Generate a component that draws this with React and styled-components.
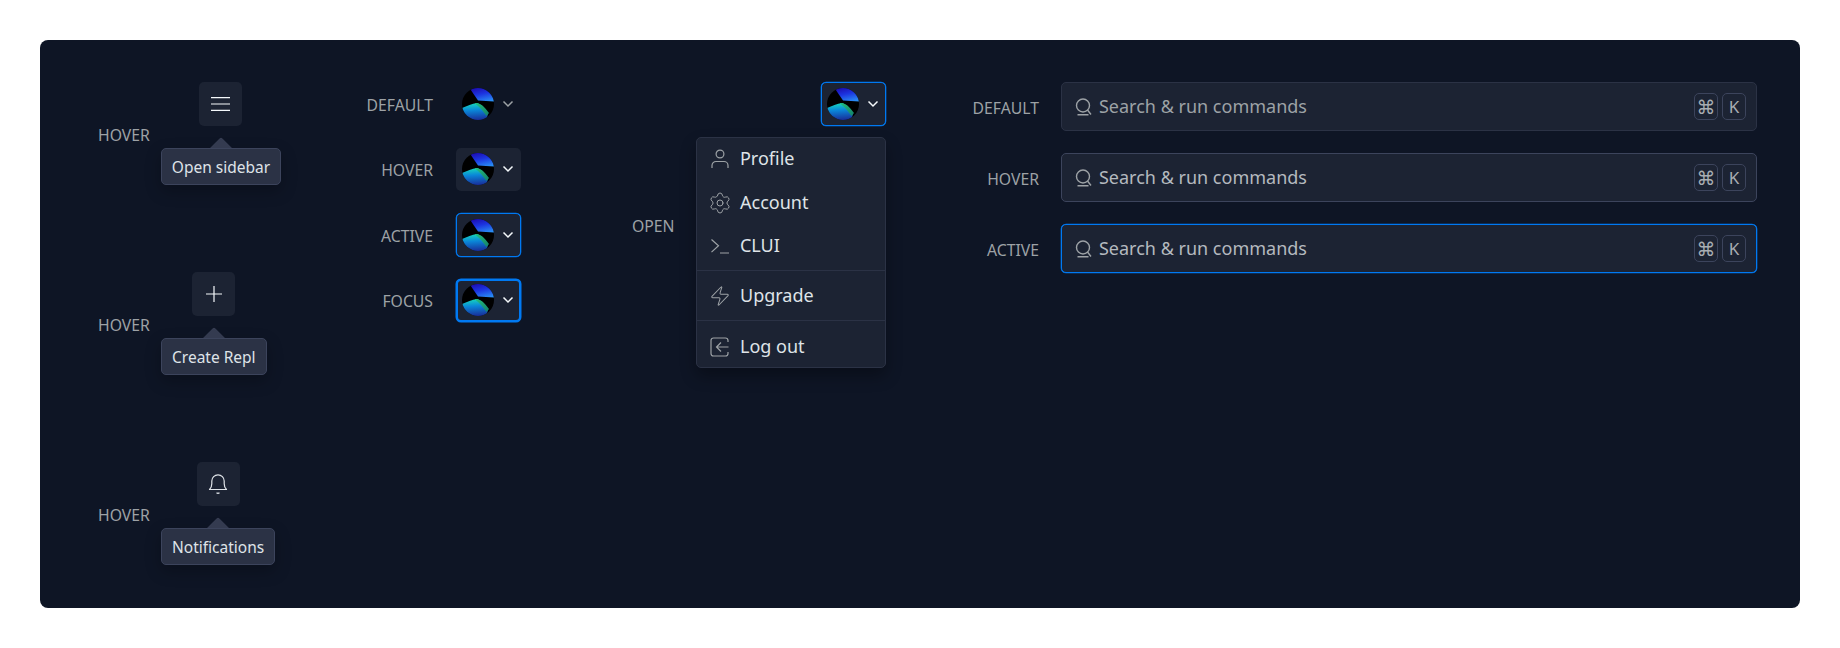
import React from "react";
import styled, { createGlobalStyle } from "styled-components";
import { Settings, Zap } from "lucide-react";

const GlobalStyle = createGlobalStyle`
  html, body { margin: 0; background: #fff; }
  body { font-family: "Noto Sans", "Open Sans", sans-serif; }
`;

const Page = styled.div`
  width: 1840px;
  height: 648px;
  padding: 40px;
  box-sizing: border-box;
`;

const Panel = styled.div`
  height: 568px;
  box-sizing: border-box;
  padding: 42px 43px 0 58px;
  background: #0e1525;
  border-radius: 8px;
  display: flex;
  align-items: flex-start;
`;

const Label = styled.span`
  justify-self: end;
  font-size: 15.75px;
  line-height: 20px;
  color: #9da2a6;
  text-align: right;
  white-space: nowrap;
  position: relative;
  top: 1px;
`;

const TooltipColumn = styled.div`
  width: 182px;
  flex: none;
  display: flex;
  flex-direction: column;
  gap: 87px;
`;

const TooltipGroup = styled.div`
  display: flex;
  align-items: center;
  gap: 11px;
`;

const GroupLabel = styled(Label)`
  width: 52px;
  text-align: left;
`;

const TooltipStack = styled.div`
  display: flex;
  flex-direction: column;
  align-items: center;
  gap: 22px;
`;

const IconTile = styled.div`
  width: 43px;
  height: 44px;
  display: flex;
  align-items: center;
  justify-content: center;
  background: #1c2333;
  border-radius: 5px;
  color: #f5f9fc;
`;

const Tooltip = styled.div`
  position: relative;
  height: 37px;
  box-sizing: border-box;
  padding: 0 10px;
  display: flex;
  align-items: center;
  font-size: 15.5px;
  color: #dfe3e8;
  background: #2b3245;
  border: 1px solid #3c445c;
  border-radius: 5px;
  box-shadow: 0 6px 16px rgba(2, 2, 3, 0.25);
  white-space: nowrap;

  &::before {
    content: "";
    position: absolute;
    left: 50%;
    top: -9px;
    width: 16px;
    height: 16px;
    margin-left: -8px;
    background: #343b50;
    transform: rotate(45deg);
    border-radius: 3px 0 0 0;
    clip-path: polygon(0 0, 100% 0, 0 100%);
  }
`;

const StateColumn = styled.div`
  margin-left: 88px;
  flex: none;
  display: grid;
  grid-template-columns: 65px 65px;
  grid-auto-rows: 43.5px;
  column-gap: 22.6px;
  row-gap: 22px;
  align-items: center;
`;

const AccountButton = styled.div`
  width: 65px;
  height: 43.5px;
  box-sizing: border-box;
  padding-left: ${(p) => (p.$state === "focus" ? 4 : 5)}px;
  display: flex;
  align-items: center;
  gap: 8px;
  border-radius: 5px;
  background: ${(p) => (p.$state === "default" ? "transparent" : "#1c2333")};
  border: ${(p) => (p.$state === "focus" ? 2 : 1)}px solid
    ${(p) => (p.$state === "active" || p.$state === "focus" ? "#0079f2" : "transparent")};
  box-shadow: ${(p) => (p.$state === "focus" ? "0 0 0 0.5px #0079f2" : p.$state === "active" ? "0 0 0 0.3px #0079f2" : "none")};
  color: ${(p) => (p.$state === "default" ? "#9da2a6" : "#f5f9fc")};
`;

const OpenColumn = styled.div`
  margin-left: 111.4px;
  flex: none;
  display: flex;
  align-items: center;
  gap: 22px;
`;

const OpenLabel = styled(Label)`
  width: 42px;
  text-align: left;
`;

const OpenStack = styled.div`
  display: flex;
  flex-direction: column;
  align-items: flex-end;
  gap: 11px;
`;

const Menu = styled.div`
  width: 190px;
  height: 231px;
  box-sizing: border-box;
  background: #1c2333;
  border: 1px solid #2b3245;
  border-radius: 5px;
  box-shadow: 0 8px 16px rgba(2, 2, 3, 0.32);
`;

const MenuSection = styled.div`
  padding: ${(p) => p.$padding};
  & + & {
    border-top: 1px solid #2b3245;
  }
`;

const MenuItem = styled.div`
  height: 43.5px;
  box-sizing: border-box;
  padding: 0 0 2px 13px;
  display: flex;
  align-items: center;
  gap: 10px;
  font-size: 18px;
  color: #dfe3e8;
`;

const MenuIcon = styled.span`
  width: 20px;
  height: 20px;
  flex: none;
  display: flex;
  align-items: center;
  justify-content: center;
  color: #9da2a6;
  position: relative;
  top: 1px;
  svg {
    flex: none;
  }
`;

const SearchColumn = styled.div`
  margin-left: 87px;
  flex: 1;
  display: grid;
  grid-template-columns: 66px 1fr;
  grid-auto-rows: 49px;
  column-gap: 22px;
  row-gap: 22px;
  align-items: center;
`;

const SearchBox = styled.div`
  height: 49px;
  box-sizing: border-box;
  padding: 0 10px 0 13px;
  display: flex;
  align-items: center;
  gap: 7px;
  background: #1c2333;
  border-radius: 5px;
  border: 1px solid
    ${(p) => (p.$state === "active" ? "#0079f2" : p.$state === "hover" ? "#3c445c" : "#2b3245")};
  box-shadow: ${(p) => (p.$state === "active" ? "0 0 0 0.3px #0079f2" : "none")};
  color: #9da2a6;
  svg {
    flex: none;
  }
`;

const SearchText = styled.span`
  flex: 1;
  font-size: 18px;
  position: relative;
  top: -1px;
  color: ${(p) => (p.$state === "default" ? "#9da2a6" : "#b4b9bf")};
`;

const Keys = styled.div`
  display: flex;
  gap: 4px;
`;

const Key = styled.kbd`
  width: 24px;
  height: 27px;
  box-sizing: border-box;
  display: flex;
  align-items: center;
  justify-content: center;
  border: 1px solid #3c445c;
  border-radius: 5px;
  font-family: ${(p) => (p.$glyph ? '"DejaVu Sans"' : '"Noto Sans"')}, sans-serif;
  font-size: ${(p) => (p.$glyph ? 19 : 17)}px;
  color: #a8adb2;
`;

function Bars() {
  return (
    <svg width="21" height="16" viewBox="0 0 21 16" fill="none" stroke="currentColor" strokeWidth="1.2">
      <path d="M1 1.700h19M1 8h19M1 14.300h19" />
    </svg>
  );
}

function Plus() {
  return (
    <svg width="18" height="18" viewBox="0 0 18 18" fill="none" stroke="currentColor" strokeWidth="1.2">
      <path d="M9 1v16M1 9h16" />
    </svg>
  );
}

function Bell() {
  return (
    <svg width="20" height="22" viewBox="0 0 20 22" fill="none" stroke="#dfe3e8" strokeWidth="1.2" strokeLinejoin="round">
      <path d="M1.500 16.500c1.600-1.500 2.300-3.200 2.300-5.700V8a6.200 6.200 0 0 1 12.400 0v2.800c0 2.500.7 4.200 2.300 5.700Z" />
      <path d="M8.500 19.700c.8.700 2.200.700 3 0" />
    </svg>
  );
}

function Chevron() {
  return (
    <svg width="12" height="8" viewBox="0 0 12 8" fill="none" stroke="currentColor" strokeWidth="1.5">
      <path d="M1.500 1.500 6 6l4.500-4.500" />
    </svg>
  );
}

function Avatar({ id }) {
  return (
    <svg width="32" height="32" viewBox="0 0 32 32">
      <defs>
        <clipPath id={`round-${id}`}>
          <circle cx="16" cy="16" r="16" />
        </clipPath>
        <linearGradient id={`top-${id}`} x1="0.35" y1="0" x2="0.75" y2="1">
          <stop offset="0" stopColor="#1c0cb0" />
          <stop offset="0.45" stopColor="#1c34e0" />
          <stop offset="1" stopColor="#2a90f5" />
        </linearGradient>
        <linearGradient id={`low-${id}`} x1="0.4" y1="0" x2="0.5" y2="1">
          <stop offset="0" stopColor="#16d8bc" />
          <stop offset="0.4" stopColor="#0a86d8" />
          <stop offset="1" stopColor="#1a2694" />
        </linearGradient>
        <linearGradient id={`ridge-${id}`} x1="0" y1="0" x2="1" y2="1">
          <stop offset="0" stopColor="#22c07c" />
          <stop offset="1" stopColor="#14806a" />
        </linearGradient>
      </defs>
      <g clipPath={`url(#round-${id})`}>
        <rect width="32" height="32" fill="#000" />
        <path d="M7.500 0 16 12.500 33 13.600V-1H7.500Z" fill={`url(#top-${id})`} />
        <path d="M0 20C5 18 10 15.500 15 15 19 16 23 21 26 26L24 33H0Z" fill={`url(#low-${id})`} />
        <path d="M13 15C18 14.500 22 18 27 25L24.500 28C21 23 18 19 13 15.500Z" fill={`url(#ridge-${id})`} />
      </g>
    </svg>
  );
}

function Person() {
  return (
    <svg width="20" height="20" viewBox="0 0 20 20" fill="none" stroke="currentColor" strokeWidth="1.2">
      <circle cx="10" cy="5" r="3.900" />
      <path d="M2 19v-2.500c0-2.200 1.800-4 4-4h8c2.200 0 4 1.800 4 4V19" />
    </svg>
  );
}

function Prompt() {
  return (
    <svg width="20" height="20" viewBox="0 0 20 20" fill="none" stroke="currentColor" strokeWidth="1.2">
      <path d="m1.500 3.500 7 6.300-7 6.300M10 17h9" />
    </svg>
  );
}

function LogOut() {
  return (
    <svg width="20" height="20" viewBox="0 0 20 20" fill="none" stroke="currentColor" strokeWidth="1.2">
      <path d="M18 5V3.500C18 2 17 1 15.500 1h-12C2 1 1 2 1 3.500v13C1 18 2 19 3.500 19h12c1.500 0 2.500-1 2.500-2.500V15" />
      <path d="M18.500 10H7M11 5.500 6.500 10l4.500 4.500" />
    </svg>
  );
}

function SearchIcon() {
  return (
    <svg width="17" height="18" viewBox="0 0 17 18" fill="none" stroke="#9da2a6" strokeWidth="1.4">
      <circle cx="8" cy="7.500" r="6.500" />
      <path d="M2.500 16.800h11M12.500 12l3.500 4.500" />
    </svg>
  );
}

const tooltips = [
  { name: "Open sidebar", icon: <Bars /> },
  { name: "Create Repl", icon: <Plus /> },
  { name: "Notifications", icon: <Bell /> },
];

const accountStates = ["default", "hover", "active", "focus"];
const searchStates = ["default", "hover", "active"];

export default function App() {
  return (
    <Page>
      <GlobalStyle />
      <Panel>
        <TooltipColumn>
          {tooltips.map((t) => (
            <TooltipGroup key={t.name}>
              <GroupLabel>HOVER</GroupLabel>
              <TooltipStack>
                <IconTile>{t.icon}</IconTile>
                <Tooltip>{t.name}</Tooltip>
              </TooltipStack>
            </TooltipGroup>
          ))}
        </TooltipColumn>

        <StateColumn>
          {accountStates.map((s) => (
            <React.Fragment key={s}>
              <Label>{s.toUpperCase()}</Label>
              <AccountButton $state={s}>
                <Avatar id={s} />
                <Chevron />
              </AccountButton>
            </React.Fragment>
          ))}
        </StateColumn>

        <OpenColumn>
          <OpenLabel>OPEN</OpenLabel>
          <OpenStack>
            <AccountButton $state="active">
              <Avatar id="open" />
              <Chevron />
            </AccountButton>
            <Menu>
              <MenuSection $padding="0 0 1.5px">
                <MenuItem><MenuIcon><Person /></MenuIcon>Profile</MenuItem>
                <MenuItem><MenuIcon><Settings size={24} strokeWidth={1} /></MenuIcon>Account</MenuItem>
                <MenuItem><MenuIcon><Prompt /></MenuIcon>CLUI</MenuItem>
              </MenuSection>
              <MenuSection $padding="4px 0 2px">
                <MenuItem><MenuIcon><Zap size={22} strokeWidth={1.1} /></MenuIcon>Upgrade</MenuItem>
              </MenuSection>
              <MenuSection $padding="4px 0 0">
                <MenuItem><MenuIcon><LogOut /></MenuIcon>Log out</MenuItem>
              </MenuSection>
            </Menu>
          </OpenStack>
        </OpenColumn>

        <SearchColumn>
          {searchStates.map((s) => (
            <React.Fragment key={s}>
              <Label>{s.toUpperCase()}</Label>
              <SearchBox $state={s}>
                <SearchIcon />
                <SearchText $state={s}>Search &amp; run commands</SearchText>
                <Keys>
                  <Key $glyph>⌘</Key>
                  <Key>K</Key>
                </Keys>
              </SearchBox>
            </React.Fragment>
          ))}
        </SearchColumn>
      </Panel>
    </Page>
  );
}
